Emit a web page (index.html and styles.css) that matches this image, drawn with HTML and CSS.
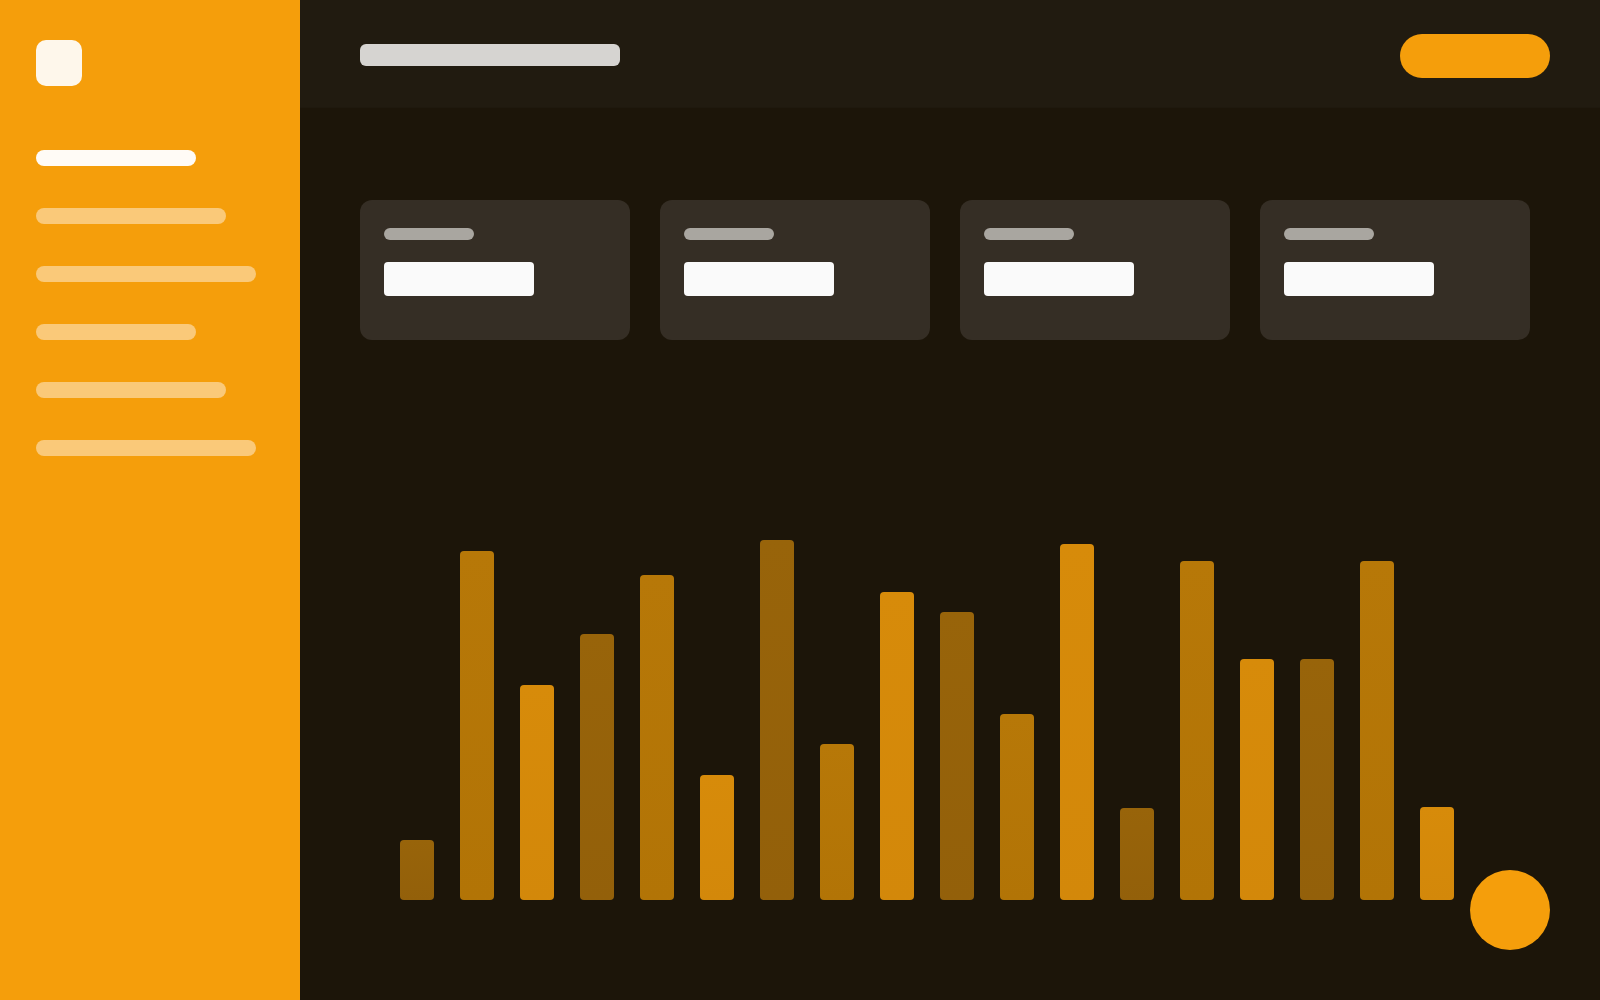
FILE: index.html
```html
<!DOCTYPE html>
<html lang="en">
<head>
<meta charset="utf-8">
<title>Dashboard</title>
<link rel="stylesheet" href="styles.css">
</head>
<body>
<div class="app">
  <aside class="sidebar">
    <div class="logo" aria-label="Logo"></div>
    <nav class="nav">
      <div class="nav-item active w160"></div>
      <div class="nav-item w190"></div>
      <div class="nav-item w220"></div>
      <div class="nav-item w160"></div>
      <div class="nav-item w190"></div>
      <div class="nav-item w220"></div>
    </nav>
  </aside>
  <main class="main">
    <header class="topbar">
      <div class="title-bar"></div>
      <div class="cta"></div>
    </header>
    <section class="content">
      <div class="cards">
        <div class="card"><div class="card-label"></div><div class="card-value"></div></div>
        <div class="card"><div class="card-label"></div><div class="card-value"></div></div>
        <div class="card"><div class="card-label"></div><div class="card-value"></div></div>
        <div class="card"><div class="card-label"></div><div class="card-value"></div></div>
      </div>
      <div class="chart">
        <div class="bar dark" style="height:60px"></div>
        <div class="bar mid" style="height:349px"></div>
        <div class="bar bright" style="height:215px"></div>
        <div class="bar dark" style="height:266px"></div>
        <div class="bar mid" style="height:325px"></div>
        <div class="bar bright" style="height:125px"></div>
        <div class="bar dark" style="height:360px"></div>
        <div class="bar mid" style="height:156px"></div>
        <div class="bar bright" style="height:308px"></div>
        <div class="bar dark" style="height:288px"></div>
        <div class="bar mid" style="height:186px"></div>
        <div class="bar bright" style="height:356px"></div>
        <div class="bar dark" style="height:92px"></div>
        <div class="bar mid" style="height:339px"></div>
        <div class="bar bright" style="height:241px"></div>
        <div class="bar dark" style="height:241px"></div>
        <div class="bar mid" style="height:339px"></div>
        <div class="bar bright" style="height:93px"></div>
      </div>
    </section>
    <div class="fab" aria-label="Add"></div>
  </main>
</div>
</body>
</html>
```

FILE: styles.css
```css
* {
  box-sizing: border-box;
}

html, body {
  margin: 0;
  padding: 0;
  width: 1600px;
  height: 1000px;
  overflow: hidden;
  font-family: "Inter", "Liberation Sans", sans-serif;
  background: #1c1509;
}

.app {
  display: flex;
  width: 1600px;
  height: 1000px;
}

.sidebar {
  width: 300px;
  flex: 0 0 300px;
  background: #f59e0b;
  padding: 40px 36px;
  display: flex;
  flex-direction: column;
}

.logo {
  width: 46px;
  height: 46px;
  border-radius: 10px;
  background: #fef7eb;
}

.nav {
  margin-top: 64px;
  display: flex;
  flex-direction: column;
  gap: 42px;
}

.nav-item {
  height: 16px;
  border-radius: 8px;
  background: #fac979;
}

.nav-item.active {
  background: #fffbf6;
}

.w160 { width: 160px; }
.w190 { width: 190px; }
.w220 { width: 220px; }

.main {
  flex: 1;
  display: flex;
  flex-direction: column;
  position: relative;
  background: #1c1509;
}

.topbar {
  height: 108px;
  flex: 0 0 108px;
  background: #211b10;
  border-bottom: 1px solid #1f190e;
  display: flex;
  align-items: flex-start;
  justify-content: space-between;
  padding: 0 50px 0 60px;
}

.title-bar {
  margin-top: 44px;
  width: 260px;
  height: 22px;
  border-radius: 6px;
  background: #d6d4d1;
}

.cta {
  margin-top: 34px;
  width: 150px;
  height: 44px;
  border-radius: 22px;
  background: #f59e0b;
}

.content {
  padding: 92px 70px 0 60px;
  display: flex;
  flex-direction: column;
}

.cards {
  display: grid;
  grid-template-columns: repeat(4, 270px);
  gap: 30px;
}

.card {
  height: 140px;
  border-radius: 12px;
  background: #352e25;
  padding: 28px 24px;
  display: flex;
  flex-direction: column;
  gap: 22px;
}

.card-label {
  width: 90px;
  height: 12px;
  border-radius: 6px;
  background: #a9a6a0;
}

.card-value {
  width: 150px;
  height: 34px;
  border-radius: 4px;
  background: #fafafa;
}

.chart {
  margin-top: 200px;
  height: 360px;
  padding-left: 40px;
  display: flex;
  align-items: flex-end;
  gap: 26px;
}

.bar {
  width: 34px;
  flex: 0 0 34px;
  border-radius: 4px;
}

.bar.dark {
  background: linear-gradient(180deg, #98640a, #93600a);
}

.bar.mid {
  background: linear-gradient(180deg, #b77808, #b27406);
}

.bar.bright {
  background: linear-gradient(180deg, #d78b0a, #d3880a);
}

.fab {
  position: absolute;
  right: 50px;
  bottom: 50px;
  width: 80px;
  height: 80px;
  border-radius: 50%;
  background: #f59e0b;
}
```
